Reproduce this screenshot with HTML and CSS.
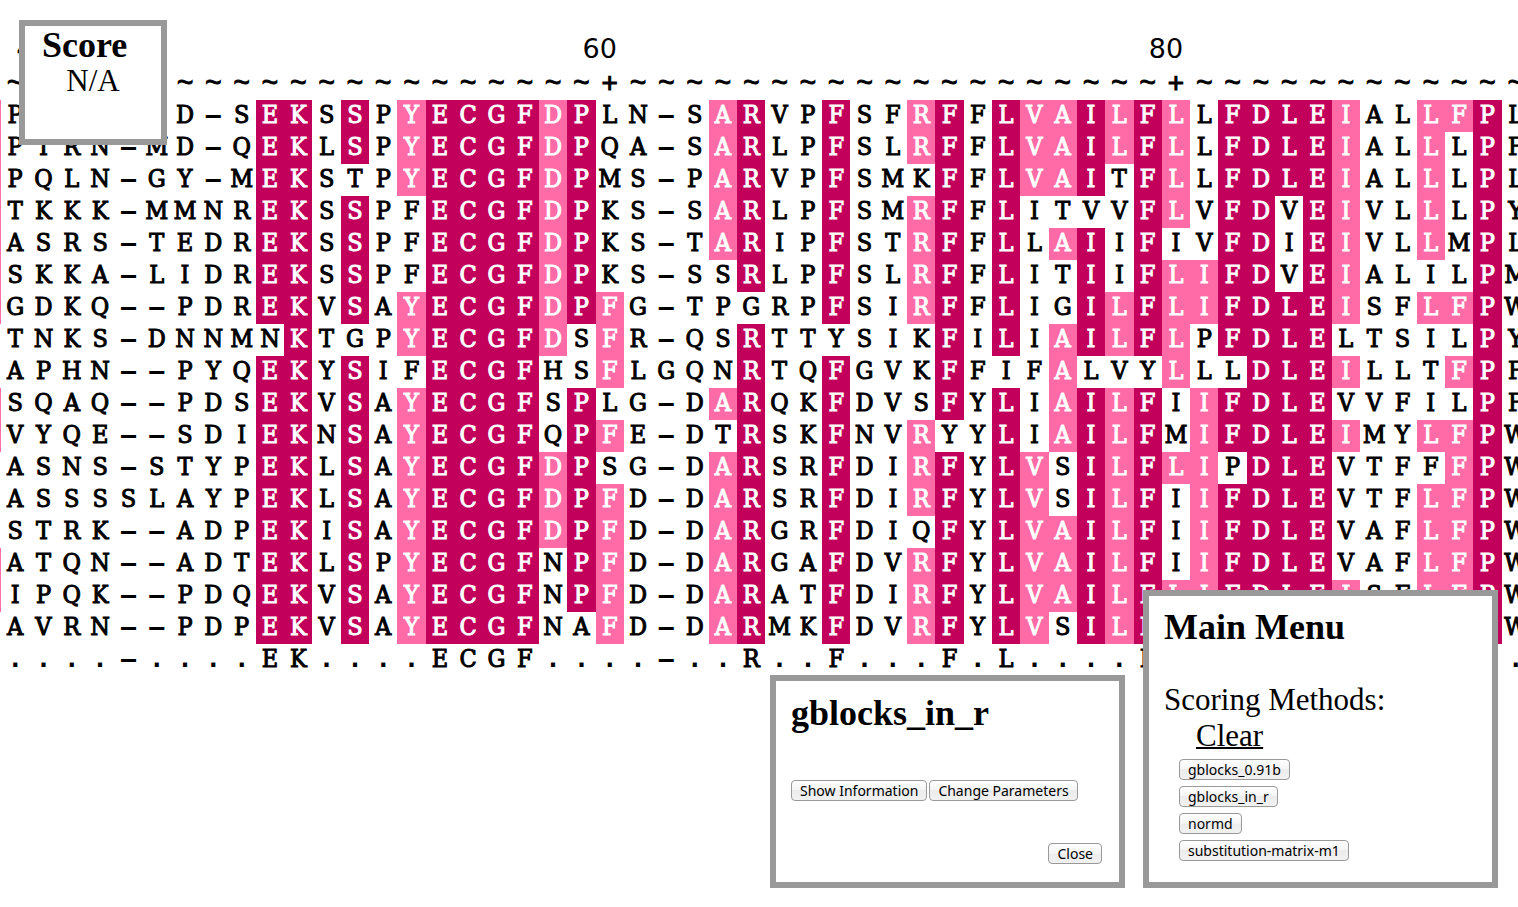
FILE: index.html
```html
<!DOCTYPE html>
<html lang="en">
<head>
<meta charset="utf-8">
<title>Alignment scoring</title>
<link rel="stylesheet" href="styles.css">
</head>
<body>
<main class="viewer">
  <table class="alignment" id="alignment"></table>
</main>

<section class="panel score">
  <h2 class="panel-title">Score</h2>
  <p class="score-value">N/A</p>
</section>

<section class="panel method">
  <h2 class="panel-title">gblocks_in_r</h2>
  <div class="method-actions">
    <button type="button" class="btn">Show Information</button>
    <button type="button" class="btn">Change Parameters</button>
  </div>
  <div class="method-close">
    <button type="button" class="btn">Close</button>
  </div>
</section>

<section class="panel menu">
  <h2 class="panel-title">Main Menu</h2>
  <p class="menu-label">Scoring Methods:</p>
  <a class="menu-clear" href="#clear">Clear</a>
  <div class="menu-list">
    <button type="button" class="btn">gblocks_0.91b</button>
    <button type="button" class="btn">gblocks_in_r</button>
    <button type="button" class="btn">normd</button>
    <button type="button" class="btn">substitution-matrix-m1</button>
  </div>
</section>
<script src="alignment.js"></script>
</body>
</html>
```

FILE: styles.css
```css
* {
  box-sizing: border-box;
}

body {
  margin: 0;
  min-height: 100vh;
  position: relative;
  overflow: hidden;
  background: #fff;
  color: #000;
  font-family: "Liberation Serif", serif;
}

.viewer {
  padding-top: 36px;
  overflow: hidden;
}

/* The last column runs past the right edge of the window. */
.alignment {
  width: calc(100% + 12px);
  table-layout: fixed;
  border-collapse: collapse;
  font-family: "DejaVu Serif Condensed", "DejaVu Serif", serif;
  font-size: 25px;
  line-height: 30px;
}

.alignment td {
  height: 32px;
  padding: 0 0 2px;
  text-align: center;
  white-space: nowrap;
}

.alignment .edge {
  width: 1px;
}

.alignment .residue {
  -webkit-text-stroke: 1px currentColor;
}

.alignment .number {
  padding: 0 7px 0 0;
  text-align: right;
  vertical-align: top;
  font-family: "DejaVu Sans", sans-serif;
  font-size: 27px;
  line-height: 26px;
}

.alignment .tick {
  padding: 2px 0 0;
  font-family: "Liberation Mono", monospace;
  font-size: 28px;
  line-height: 28px;
  -webkit-text-stroke: 1px currentColor;
}

.alignment .gap {
  font-family: "DejaVu Sans Mono", monospace;
  font-weight: bold;
}

.alignment .strong {
  background: #c2005c;
  color: #fff;
}

.alignment .weak {
  background: #ff6ba6;
  color: #fff;
}

.panel {
  position: absolute;
  border: 6px solid #999;
  background: #fff;
}

.panel-title {
  margin: 0;
  font-size: 36px;
  line-height: 38px;
}

.score {
  top: 20px;
  left: 19px;
  width: 148px;
  height: 125px;
}

.score .panel-title {
  padding-left: 17px;
}

.score-value {
  margin: 0;
  text-align: center;
  font-size: 31px;
  line-height: 34px;
}

.method {
  right: 393px;
  bottom: 19px;
  width: 355px;
  padding: 13px 17px 18px 15px;
}

.method-actions {
  display: flex;
  gap: 2px;
  margin-top: 48px;
}

.method-close {
  display: flex;
  justify-content: flex-end;
  margin-top: 42px;
}

.menu {
  right: 20px;
  bottom: 19px;
  width: 355px;
  padding: 12px 15px 21px;
}

.menu-label {
  margin: 36px 0 0;
  font-size: 31px;
  line-height: 36px;
}

.menu-clear {
  display: block;
  width: fit-content;
  margin-left: 32px;
  color: #000;
  font-size: 31px;
  line-height: 36px;
  text-decoration-thickness: 2px;
}

.menu-list {
  display: flex;
  flex-direction: column;
  align-items: flex-start;
  gap: 6px;
  margin: 5px 0 0 15px;
}

.btn {
  height: 21px;
  padding: 0 8px;
  border: 1px solid #999;
  border-radius: 4px;
  background: linear-gradient(#fff, #f4f4f4 50%, #ececec 50%, #f1f1f1);
  color: #000;
  font-family: "Noto Sans", sans-serif;
  font-size: 14px;
  line-height: 18px;
  white-space: nowrap;
}
```

FILE: alignment.js
```js
const sequences = [
  "PTRN--D-SEKSSPYECGFDPLN-SARVPFSFRFFLVAILFLLFDLEIALLFPL",
  "PTRN-MD-QEKLSPYECGFDPQA-SARLPFSLRFFLVAILFLLFDLEIALLLPF",
  "PQLN-GY-MEKSTPYECGFDPMS-PARVPFSMKFFLVAITFLLFDLEIALLLPL",
  "TKKK-MMNREKSSPFECGFDPKS-SARLPFSMRFFLITVVFLVFDVEIVLLLPY",
  "ASRS-TEDREKSSPFECGFDPKS-TARIPFSTRFFLLAIIFIVFDIEIVLLMPL",
  "SKKA-LIDREKSSPFECGFDPKS-SSRLPFSLRFFLITIIFLIFDVEIALILPM",
  "GDKQ--PDREKVSAYECGFDPFG-TPGRPFSIRFFLIGILFLIFDLEISFLFPW",
  "TNKS-DNNMNKTGPYECGFDSFR-QSRTTYSIKFILIAILFLPFDLELTSILPY",
  "APHN--PYQEKYSIFECGFHSFLGQNRTQFGVKFFIFALVYLLLDLEILLTFPF",
  "SQAQ--PDSEKVSAYECGFSPLG-DARQKFDVSFYLIAILFIIFDLEVVFILPF",
  "VYQE--SDIEKNSAYECGFQPFE-DTRSKFNVRYYLIAILFMIFDLEIMYLFPW",
  "ASNS-STYPEKLSAYECGFDPSG-DARSRFDIRFYLVSILFLIPDLEVTFFFPW",
  "ASSSSLAYPEKLSAYECGFDPFD-DARSRFDIRFYLVSILFIIFDLEVTFLFPW",
  "STRK--ADPEKISAYECGFDPFD-DARGRFDIQFYLVAILFIIFDLEVAFLFPW",
  "ATQN--ADTEKLSPYECGFNPFD-DARGAFDVRFYLVAILFIIFDLEVAFLFPW",
  "IPQK--PDQEKVSAYECGFNPFD-DARATFDIRFYLVAILFLIFDLEISFLFPW",
  "AVRN--PDPEKVSAYECGFNAFD-DARMKFDVRFYLVSILFLIFDLEISFLFPW"
];
const consensus = "....-....EK....ECGF....-..R..F...F.L....F............";

// Conserved residues by column: upper case is strong, lower case is weak.
const conserved = {
  9: "E", 10: "K", 12: "S", 14: "y", 15: "E", 16: "C", 17: "G", 18: "F",
  19: "d", 20: "P", 21: "f", 25: "a", 26: "R", 29: "F", 32: "r", 33: "F",
  35: "L", 36: "v", 37: "a", 38: "I", 39: "l", 40: "F", 41: "l", 42: "i",
  43: "F", 44: "D", 45: "L", 46: "E", 47: "i", 50: "l", 51: "f", 52: "P"
};
// Rows whose residue just left of the view is weakly conserved.
const edgeRows = [0, 1, 2, 3, 4, 5, 6, 9, 10, 14, 15];
const columns = 54;
const table = document.getElementById("alignment");

function addCell(row, text, className) {
  const cell = row.insertCell();
  cell.textContent = text;
  cell.className = className;
  return cell;
}

function addRow(edgeClass) {
  const row = table.insertRow();
  addCell(row, "", edgeClass);
  return row;
}

function addResidue(row, char, shade) {
  if (char === "-") addCell(row, "–", "gap");
  else if (char === ".") addCell(row, ".", "gap");
  else addCell(row, char, `residue ${shade}`.trim());
}

const group = document.createElement("colgroup");
for (let i = 0; i <= columns; i++) {
  const col = document.createElement("col");
  if (i === 0) col.className = "edge";
  group.append(col);
}
table.append(group);

const numbers = addRow("edge");
[["40", 2], ["", 18], ["60", 2], ["", 18], ["80", 2], ["", 12]].forEach(([text, span]) => {
  addCell(numbers, text, "number").colSpan = span;
});

const ruler = addRow("edge");
for (let i = 0; i < columns; i++) addCell(ruler, i % 20 === 1 ? "+" : "~", "tick");

sequences.forEach((sequence, index) => {
  const row = addRow(edgeRows.includes(index) ? "edge weak" : "edge");
  [...sequence].forEach((char, i) => {
    const key = conserved[i];
    let shade = "";
    if (key && key.toUpperCase() === char) shade = key === char ? "strong" : "weak";
    addResidue(row, char, shade);
  });
});

const footer = addRow("edge");
[...consensus.padEnd(columns, ".")].forEach((char) => addResidue(footer, char, ""));
```
